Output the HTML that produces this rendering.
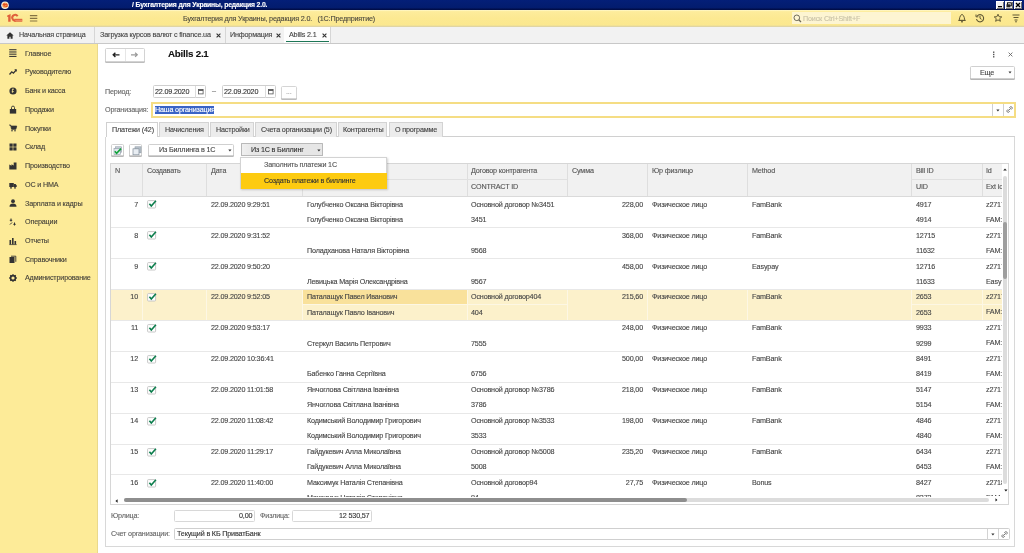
<!DOCTYPE html>
<html><head><meta charset="utf-8"><style>
html,body{margin:0;padding:0;width:1024px;height:553px;overflow:hidden;background:#fff}
body{position:relative;font-family:"Liberation Sans",sans-serif}
.t{position:absolute;white-space:nowrap;line-height:10px;font-family:"Liberation Sans",sans-serif;will-change:transform;-webkit-text-stroke:0.12px}
svg{overflow:visible}
</style></head><body>
<div style="position:absolute;left:0px;top:0px;width:1024px;height:10px;background:linear-gradient(#041f78,#031c6e 75%,#000a40)"></div>
<svg style="position:absolute;left:1px;top:0.8px;" width="8" height="8" viewBox="0 0 8 8"><circle cx="4" cy="4.2" r="3.8" fill="#fbeedd"/><circle cx="4" cy="4.3" r="2.7" fill="#f6b26a"/><path d="M1.8 3.6l1.3-0.8v3M4 4.4a1.1 1.1 0 1 1 2 0.4M4.3 5.4h2.2" stroke="#e5461a" stroke-width="1.1" fill="none"/></svg>
<div class="t" style="left:132px;top:-0.30px;font-size:6.835px;letter-spacing:-0.161px;color:#ffffff;font-weight:bold;">/ Бухгалтерия для Украины, редакция 2.0.</div>
<div style="position:absolute;left:996px;top:1px;width:8px;height:7.5px;background:#f0f0f0;border-top:1px solid #fff;border-left:1px solid #fff;box-sizing:border-box;box-shadow:inset -1px -1px 0 #707070"></div>
<div style="position:absolute;left:1005px;top:1px;width:8px;height:7.5px;background:#f0f0f0;border-top:1px solid #fff;border-left:1px solid #fff;box-sizing:border-box;box-shadow:inset -1px -1px 0 #707070"></div>
<div style="position:absolute;left:1014px;top:1px;width:8px;height:7.5px;background:#f0f0f0;border-top:1px solid #fff;border-left:1px solid #fff;box-sizing:border-box;box-shadow:inset -1px -1px 0 #707070"></div>
<svg style="position:absolute;left:996px;top:1px;" width="8" height="8" viewBox="0 0 8 8"><rect x="2" y="5" width="4" height="1.3" fill="#000"/></svg>
<svg style="position:absolute;left:1005px;top:1px;" width="8" height="8" viewBox="0 0 8 8"><rect x="2.5" y="1.8" width="3.8" height="3" fill="none" stroke="#000" stroke-width="0.9"/><rect x="1.5" y="3.3" width="3.8" height="3" fill="#222"/></svg>
<svg style="position:absolute;left:1014px;top:1px;" width="8" height="8" viewBox="0 0 8 8"><path d="M2 2L6 6M6 2L2 6" stroke="#000" stroke-width="1.3"/></svg>
<div style="position:absolute;left:0px;top:10px;width:1024px;height:16.5px;background:linear-gradient(#fff8cc 0,#fdec9c 1.6px,#fce992 8px,#fbe88f 15px,#e0d5a4 16.5px);box-sizing:border-box"></div>
<svg style="position:absolute;left:7px;top:14px;" width="16" height="8" viewBox="0 0 16 8"><path d="M0.2 1.5L3.6 0V7.7H1.2V2.7L0.2 3z" fill="#e0603c"/><path d="M10.6 2.2A2.9 2.9 0 1 0 8.6 6.6" fill="none" stroke="#e0603c" stroke-width="2.1"/><rect x="7.4" y="4.8" width="7.9" height="2.9" fill="#e0603c"/><rect x="8.2" y="5.9" width="7" height="0.7" fill="#f2a07a"/></svg>
<svg style="position:absolute;left:29px;top:14px;" width="9" height="9" viewBox="0 0 9 9"><path d="M0.9 1.6h7.4M0.9 4.4h7.4M0.9 7h7.4" stroke="#857444" stroke-width="1.1"/></svg>
<div class="t" style="left:183px;top:13.90px;font-size:7.203px;letter-spacing:-0.170px;color:#4d4a3f;font-weight:normal;">Бухгалтерия для Украины, редакция 2.0.&nbsp;&nbsp;&nbsp;(1С:Предприятие)</div>
<div style="position:absolute;left:792px;top:12px;width:159px;height:12px;background:#fdf5d2"></div>
<svg style="position:absolute;left:793px;top:13.5px;" width="9" height="10" viewBox="0 0 9 10"><circle cx="3.8" cy="3.8" r="2.8" fill="none" stroke="#6e6a5a" stroke-width="1"/><path d="M5.8 5.8L8 8" stroke="#6e6a5a" stroke-width="1.3"/></svg>
<div class="t" style="left:803px;top:13.50px;font-size:7.203px;letter-spacing:-0.170px;color:#c9c2a6;font-weight:normal;">Поиск Ctrl+Shift+F</div>
<svg style="position:absolute;left:957px;top:13px;" width="10" height="10" viewBox="0 0 10 10"><path d="M2.2 7.4C2.6 6.4 2.5 2.2 5 1.4 7.5 2.2 7.4 6.4 7.8 7.4z" fill="none" stroke="#5e5633" stroke-width="1"/><path d="M1.3 7.4h7.4" stroke="#5e5633" stroke-width="1"/><circle cx="5" cy="8.7" r="0.9" fill="#5e5633"/></svg>
<svg style="position:absolute;left:975px;top:13px;" width="10" height="10" viewBox="0 0 10 10"><path d="M2.2 3A3.6 3.6 0 1 1 1.5 6" fill="none" stroke="#5e5633" stroke-width="1.1"/><path d="M1 1.5v2.3h2.3" fill="none" stroke="#5e5633" stroke-width="1"/><path d="M5 3v2.3l1.5 1" fill="none" stroke="#5e5633" stroke-width="1"/></svg>
<svg style="position:absolute;left:993px;top:13px;" width="10" height="10" viewBox="0 0 10 10"><path d="M5 1.2l1.1 2.5 2.7.2-2.1 1.8.7 2.6L5 6.9 2.6 8.3l.7-2.6-2.1-1.8 2.7-.2z" fill="none" stroke="#5e5633" stroke-width="0.95"/></svg>
<svg style="position:absolute;left:1011px;top:13px;" width="10" height="10" viewBox="0 0 10 10"><path d="M1.5 2h7M2.5 4.5h5M3.5 7h3" stroke="#5e5633" stroke-width="1"/><circle cx="5" cy="8.8" r="0.8" fill="#5e5633"/></svg>
<div style="position:absolute;left:0px;top:26.5px;width:1024px;height:17.5px;background:#f2f2f2;border-bottom:1px solid #c8c8c8;box-sizing:border-box"></div>
<svg style="position:absolute;left:6px;top:31.5px;" width="8" height="7" viewBox="0 0 8 7"><path d="M4 0.3L0.3 3.6h1.1v3.2h2v-2h1.2v2h2V3.6h1.1z" fill="#333"/></svg>
<div class="t" style="left:19px;top:30.10px;font-size:7.203px;letter-spacing:-0.170px;color:#444;font-weight:normal;">Начальная страница</div>
<div style="position:absolute;left:93.5px;top:27px;width:1.0px;height:16px;background:#d6d6d6"></div>
<div style="position:absolute;left:224.5px;top:27px;width:1.0px;height:16px;background:#d6d6d6"></div>
<div style="position:absolute;left:283.5px;top:27px;width:1.0px;height:16px;background:#d6d6d6"></div>
<div style="position:absolute;left:330px;top:27px;width:1px;height:16px;background:#d6d6d6"></div>
<div class="t" style="left:100px;top:30.10px;font-size:7.203px;letter-spacing:-0.170px;color:#444;font-weight:normal;">Загрузка курсов валют с finance.ua</div>
<div class="t" style="left:230px;top:30.10px;font-size:7.203px;letter-spacing:-0.170px;color:#444;font-weight:normal;">Информация</div>
<div style="position:absolute;left:284.2px;top:27px;width:45.80000000000001px;height:16px;background:#fdfdfd"></div>
<div class="t" style="left:289px;top:30.10px;font-size:7.203px;letter-spacing:-0.170px;color:#444;font-weight:normal;">Abills 2.1</div>
<svg style="position:absolute;left:215.8px;top:32.5px;" width="5" height="5" viewBox="0 0 5 5"><path d="M0.6 0.6L4.4 4.4M4.4 0.6L0.6 4.4" stroke="#333" stroke-width="1.1"/></svg>
<svg style="position:absolute;left:275.8px;top:32.5px;" width="5" height="5" viewBox="0 0 5 5"><path d="M0.6 0.6L4.4 4.4M4.4 0.6L0.6 4.4" stroke="#333" stroke-width="1.1"/></svg>
<svg style="position:absolute;left:321.8px;top:32.5px;" width="5" height="5" viewBox="0 0 5 5"><path d="M0.6 0.6L4.4 4.4M4.4 0.6L0.6 4.4" stroke="#333" stroke-width="1.1"/></svg>
<div style="position:absolute;left:285.5px;top:40.9px;width:43.0px;height:1.3000000000000043px;background:#1d7656"></div>
<div style="position:absolute;left:0px;top:44px;width:98px;height:509px;background:#fdeb98;box-shadow:inset -1px 0 0 #ead98c"></div>
<svg style="position:absolute;left:9px;top:49.4px;" width="8" height="8" viewBox="0 0 8 8"><rect x="0.2" y="0.2" width="7.3" height="1.05" fill="#333"/><rect x="0.2" y="2.45" width="7.3" height="1.05" fill="#333"/><rect x="0.2" y="4.65" width="7.3" height="1.05" fill="#333"/><rect x="0.2" y="6.9" width="7.3" height="1.05" fill="#333"/></svg>
<div class="t" style="left:24.8px;top:48.70px;font-size:7.203px;letter-spacing:-0.170px;color:#45423a;font-weight:normal;">Главное</div>
<svg style="position:absolute;left:9px;top:68.13px;" width="8" height="8" viewBox="0 0 8 8"><path d="M0.5 6.5L2.8 3.8 4.4 5.2 7 2.2" fill="none" stroke="#333" stroke-width="1.3"/><path d="M5.6 1.6h1.9v1.9" fill="#333" stroke="#333" stroke-width="0.6"/></svg>
<div class="t" style="left:24.8px;top:67.43px;font-size:7.203px;letter-spacing:-0.170px;color:#45423a;font-weight:normal;">Руководителю</div>
<svg style="position:absolute;left:9px;top:86.86px;" width="8" height="8" viewBox="0 0 8 8"><circle cx="4" cy="4" r="3.6" fill="#333"/><path d="M3 2.2h2M3.4 2.2v3.6M2.8 4.6h2" stroke="#fbe995" stroke-width="0.8"/></svg>
<div class="t" style="left:24.8px;top:86.16px;font-size:7.203px;letter-spacing:-0.170px;color:#45423a;font-weight:normal;">Банк и касса</div>
<svg style="position:absolute;left:9px;top:105.59px;" width="8" height="8" viewBox="0 0 8 8"><path d="M0.8 3h6.4v4.6H0.8z" fill="#333"/><path d="M2.5 3V1.6a1.5 1.5 0 0 1 3 0V3" fill="none" stroke="#333" stroke-width="0.9"/></svg>
<div class="t" style="left:24.8px;top:104.89px;font-size:7.203px;letter-spacing:-0.170px;color:#45423a;font-weight:normal;">Продажи</div>
<svg style="position:absolute;left:9px;top:124.32px;" width="8" height="8" viewBox="0 0 8 8"><path d="M0.2 1h1.4l1 4.3h4.2l0.9-3.2H2" fill="#333" stroke="#333" stroke-width="0.8"/><circle cx="3" cy="6.8" r="0.8" fill="#333"/><circle cx="6" cy="6.8" r="0.8" fill="#333"/></svg>
<div class="t" style="left:24.8px;top:123.62px;font-size:7.203px;letter-spacing:-0.170px;color:#45423a;font-weight:normal;">Покупки</div>
<svg style="position:absolute;left:9px;top:143.05px;" width="8" height="8" viewBox="0 0 8 8"><rect x="0.5" y="0.5" width="3.2" height="3.2" fill="#333"/><rect x="4.3" y="0.5" width="3.2" height="3.2" fill="#333"/><rect x="0.5" y="4.3" width="3.2" height="3.2" fill="#333"/><rect x="4.3" y="4.3" width="3.2" height="3.2" fill="#333"/></svg>
<div class="t" style="left:24.8px;top:142.35px;font-size:7.203px;letter-spacing:-0.170px;color:#45423a;font-weight:normal;">Склад</div>
<svg style="position:absolute;left:9px;top:161.78px;" width="8" height="8" viewBox="0 0 8 8"><path d="M0.3 7.6V2.5l2.2 1.3V2.2l2.2 1.4V0.6h2.8v7z" fill="#333"/></svg>
<div class="t" style="left:24.8px;top:161.08px;font-size:7.203px;letter-spacing:-0.170px;color:#45423a;font-weight:normal;">Производство</div>
<svg style="position:absolute;left:9px;top:180.51px;" width="8" height="8" viewBox="0 0 8 8"><rect x="0.3" y="2" width="4.5" height="4" fill="#333"/><path d="M4.8 3h1.8l1.1 1.5V6H4.8z" fill="#333"/><circle cx="2" cy="6.8" r="0.9" fill="#333"/><circle cx="6" cy="6.8" r="0.9" fill="#333"/></svg>
<div class="t" style="left:24.8px;top:179.81px;font-size:7.203px;letter-spacing:-0.170px;color:#45423a;font-weight:normal;">ОС и НМА</div>
<svg style="position:absolute;left:9px;top:199.24px;" width="8" height="8" viewBox="0 0 8 8"><circle cx="4" cy="2.2" r="1.9" fill="#333"/><path d="M0.5 7.8c0-2.6 1.5-3.4 3.5-3.4s3.5 0.8 3.5 3.4z" fill="#333"/></svg>
<div class="t" style="left:24.8px;top:198.54px;font-size:7.203px;letter-spacing:-0.170px;color:#45423a;font-weight:normal;">Зарплата и кадры</div>
<svg style="position:absolute;left:9px;top:217.97px;" width="8" height="8" viewBox="0 0 8 8"><path d="M2 0.5v3M0.8 2.3h2.4M5.5 4.5v3M4.3 6.3h2.4M1 6.5l2-2" stroke="#333" stroke-width="1"/></svg>
<div class="t" style="left:24.8px;top:217.27px;font-size:7.203px;letter-spacing:-0.170px;color:#45423a;font-weight:normal;">Операции</div>
<svg style="position:absolute;left:9px;top:236.7px;" width="8" height="8" viewBox="0 0 8 8"><rect x="0.5" y="3" width="1.6" height="4.5" fill="#333"/><rect x="3" y="1" width="1.6" height="6.5" fill="#333"/><rect x="5.5" y="4" width="1.6" height="3.5" fill="#333"/><path d="M0.3 7.6h7.4" stroke="#333" stroke-width="0.7"/></svg>
<div class="t" style="left:24.8px;top:236.00px;font-size:7.203px;letter-spacing:-0.170px;color:#45423a;font-weight:normal;">Отчеты</div>
<svg style="position:absolute;left:9px;top:255.43px;" width="8" height="8" viewBox="0 0 8 8"><rect x="0.5" y="2" width="5" height="6" fill="#333"/><path d="M2 1.2h4.8v5.6" fill="none" stroke="#333" stroke-width="0.9"/></svg>
<div class="t" style="left:24.8px;top:254.73px;font-size:7.203px;letter-spacing:-0.170px;color:#45423a;font-weight:normal;">Справочники</div>
<svg style="position:absolute;left:9px;top:274.16px;" width="8" height="8" viewBox="0 0 8 8"><circle cx="4" cy="4" r="2.4" fill="none" stroke="#333" stroke-width="1.6"/><path d="M4 0.2v1.6M4 6.2v1.6M0.2 4h1.6M6.2 4h1.6M1.3 1.3l1.1 1.1M5.6 5.6l1.1 1.1M6.7 1.3L5.6 2.4M2.4 5.6L1.3 6.7" stroke="#333" stroke-width="1.3"/></svg>
<div class="t" style="left:24.8px;top:273.46px;font-size:7.203px;letter-spacing:-0.170px;color:#45423a;font-weight:normal;">Администрирование</div>
<div style="position:absolute;left:105px;top:48px;width:39.5px;height:13.5px;background:#fff;border:1px solid #d3d3d3;border-radius:1.5px;box-sizing:border-box;box-shadow:0 1px 0 #bdbdbd"></div>
<div style="position:absolute;left:125px;top:49px;width:0.7999999999999972px;height:11.5px;background:#e6e6e6"></div>
<svg style="position:absolute;left:111.5px;top:51px;" width="9" height="8" viewBox="0 0 9 8"><path d="M1.2 3.8h6.3M3.4 1.7L1.2 3.8 3.4 5.9" fill="none" stroke="#222" stroke-width="1.35"/></svg>
<svg style="position:absolute;left:130px;top:51px;" width="9" height="8" viewBox="0 0 9 8"><path d="M7.3 3.8H1M5.1 1.7L7.3 3.8 5.1 5.9" fill="none" stroke="#9a9a9a" stroke-width="1.2"/></svg>
<div class="t" style="left:168px;top:49.30px;font-size:9.779px;letter-spacing:-0.231px;color:#111;font-weight:bold;">Abills 2.1</div>
<svg style="position:absolute;left:992px;top:51px;" width="4" height="7" viewBox="0 0 4 7"><rect x="1" y="0.5" width="1.4" height="1.4" fill="#555"/><rect x="1" y="2.8" width="1.4" height="1.4" fill="#555"/><rect x="1" y="5.1" width="1.4" height="1.4" fill="#555"/></svg>
<svg style="position:absolute;left:1007.5px;top:52px;" width="5" height="5" viewBox="0 0 5 5"><path d="M0.6 0.6L4.4 4.4M4.4 0.6L0.6 4.4" stroke="#666" stroke-width="0.9"/></svg>
<div style="position:absolute;left:969.5px;top:66px;width:45.0px;height:12.5px;background:#fff;border:1px solid #d0d0d0;border-radius:1.5px;box-sizing:border-box;box-shadow:0 1px 0 #b5b5b5"></div>
<div class="t" style="left:980px;top:67.90px;font-size:7.203px;letter-spacing:-0.170px;color:#444;font-weight:normal;">Еще</div>
<svg style="position:absolute;left:1007.5px;top:71px;" width="4" height="3" viewBox="0 0 4 3"><path d="M0.5 0.5h3L2 2.5z" fill="#333"/></svg>
<div class="t" style="left:105px;top:86.80px;font-size:7.203px;letter-spacing:-0.170px;color:#666;font-weight:normal;">Период:</div>
<div style="position:absolute;left:153px;top:85.3px;width:53.30000000000001px;height:13.200000000000003px;background:#fff;border:1px solid #cfcfcf;border-radius:1.5px;box-sizing:border-box"></div>
<div style="position:absolute;left:194.5px;top:86px;width:0.8000000000000114px;height:12px;background:#dcdcdc"></div>
<div class="t" style="left:155px;top:86.80px;font-size:7.203px;letter-spacing:-0.170px;color:#333;font-weight:normal;">22.09.2020</div>
<svg style="position:absolute;left:197.7px;top:89.3px;" width="6" height="6" viewBox="0 0 6 6"><rect x="0.5" y="0.5" width="4.6" height="4.4" fill="none" stroke="#555" stroke-width="0.8"/><rect x="0.5" y="0.5" width="4.6" height="1.4" fill="#555"/></svg>
<div style="position:absolute;left:222.2px;top:85.3px;width:53.400000000000034px;height:13.200000000000003px;background:#fff;border:1px solid #cfcfcf;border-radius:1.5px;box-sizing:border-box"></div>
<div style="position:absolute;left:264.7px;top:86px;width:0.8000000000000114px;height:12px;background:#dcdcdc"></div>
<div class="t" style="left:224.2px;top:86.80px;font-size:7.203px;letter-spacing:-0.170px;color:#333;font-weight:normal;">22.09.2020</div>
<svg style="position:absolute;left:267.9px;top:89.3px;" width="6" height="6" viewBox="0 0 6 6"><rect x="0.5" y="0.5" width="4.6" height="4.4" fill="none" stroke="#555" stroke-width="0.8"/><rect x="0.5" y="0.5" width="4.6" height="1.4" fill="#555"/></svg>
<div class="t" style="left:212px;top:86.30px;font-size:7.203px;letter-spacing:-0.170px;color:#555;font-weight:normal;">–</div>
<div style="position:absolute;left:281px;top:86px;width:15.5px;height:12.5px;background:#fff;border:1px solid #d5d5d5;border-radius:1.5px;box-sizing:border-box;box-shadow:0 1px 0 #bdbdbd"></div>
<div class="t" style="left:285.5px;top:87.30px;font-size:7.203px;letter-spacing:-0.170px;color:#999;font-weight:normal;">...</div>
<div class="t" style="left:105px;top:104.80px;font-size:7.203px;letter-spacing:-0.170px;color:#666;font-weight:normal;">Организация:</div>
<div style="position:absolute;left:151.4px;top:102.2px;width:864.6px;height:15.799999999999997px;background:#fff;border:2px solid #f5dd84;box-sizing:border-box"></div>
<div style="position:absolute;left:154.6px;top:106px;width:59.599999999999994px;height:8.299999999999997px;background:#3a63c5"></div>
<div class="t" style="left:155px;top:105.00px;font-size:7.203px;letter-spacing:-0.170px;color:#fff;font-weight:normal;">Наша организация</div>
<div style="position:absolute;left:992.2px;top:104px;width:0.7999999999999545px;height:12px;background:#d0d0d0"></div>
<div style="position:absolute;left:1003.4px;top:104px;width:0.8000000000000682px;height:12px;background:#d0d0d0"></div>
<svg style="position:absolute;left:996px;top:108.5px;" width="4" height="3" viewBox="0 0 4 3"><path d="M0.3 0.5h3.2L1.9 2.6z" fill="#333"/></svg>
<svg style="position:absolute;left:1006px;top:106px;" width="7" height="7" viewBox="0 0 7 7"><path d="M2.2 4.8l2.6-2.6M3.3 1.8l0.9-0.9a1.3 1.3 0 0 1 1.8 1.8L5.1 3.6M3.8 5.2l-0.9 0.9a1.3 1.3 0 0 1-1.8-1.8l0.9-0.9" fill="none" stroke="#555" stroke-width="0.8"/></svg>
<div style="position:absolute;left:105px;top:136.5px;width:910px;height:410.5px;border:1px solid #d8d8d8;border-top:none;box-sizing:border-box;background:#fff"></div>
<div style="position:absolute;left:158px;top:136px;width:857px;height:1px;background:#d0d0d0"></div>
<div style="position:absolute;left:105.5px;top:122px;width:52.5px;height:15px;background:#fff;border:1px solid #d0d0d0;border-bottom:none;box-sizing:border-box"></div>
<div class="t" style="left:111.7px;top:124.70px;font-size:7.203px;letter-spacing:-0.170px;color:#444;font-weight:normal;">Платежи (42)</div>
<div style="position:absolute;left:158.6px;top:122px;width:50.20000000000002px;height:14.5px;background:#ececec;border:1px solid #d3d3d3;border-bottom:none;box-sizing:border-box"></div>
<div class="t" style="left:164.8px;top:124.70px;font-size:7.203px;letter-spacing:-0.170px;color:#444;font-weight:normal;">Начисления</div>
<div style="position:absolute;left:210.0px;top:122px;width:43.900000000000006px;height:14.5px;background:#ececec;border:1px solid #d3d3d3;border-bottom:none;box-sizing:border-box"></div>
<div class="t" style="left:215.6px;top:124.70px;font-size:7.203px;letter-spacing:-0.170px;color:#444;font-weight:normal;">Настройки</div>
<div style="position:absolute;left:255.1px;top:122px;width:81.69999999999996px;height:14.5px;background:#ececec;border:1px solid #d3d3d3;border-bottom:none;box-sizing:border-box"></div>
<div class="t" style="left:260.5px;top:124.70px;font-size:7.203px;letter-spacing:-0.170px;color:#444;font-weight:normal;">Счета организации (5)</div>
<div style="position:absolute;left:338.0px;top:122px;width:49.39999999999998px;height:14.5px;background:#ececec;border:1px solid #d3d3d3;border-bottom:none;box-sizing:border-box"></div>
<div class="t" style="left:343.4px;top:124.70px;font-size:7.203px;letter-spacing:-0.170px;color:#444;font-weight:normal;">Контрагенты</div>
<div style="position:absolute;left:388.6px;top:122px;width:54.799999999999955px;height:14.5px;background:#ececec;border:1px solid #d3d3d3;border-bottom:none;box-sizing:border-box"></div>
<div class="t" style="left:395px;top:124.70px;font-size:7.203px;letter-spacing:-0.170px;color:#444;font-weight:normal;">О программе</div>
<div style="position:absolute;left:110.6px;top:143.6px;width:13.100000000000009px;height:12.900000000000006px;background:#fff;border:1px solid #d0d0d0;border-radius:1.5px;box-sizing:border-box;box-shadow:0 1px 0 #b8b8b8"></div>
<svg style="position:absolute;left:112.5px;top:145.5px;" width="10" height="10" viewBox="0 0 10 10"><rect x="2.5" y="0.8" width="6" height="5.5" fill="#c9d2da" stroke="#8e9aa6" stroke-width="0.6"/><rect x="1" y="2.5" width="6.5" height="6" fill="#e2e8ee" stroke="#8e9aa6" stroke-width="0.6"/><path d="M1.8 5.2l1.8 2 4.4-4.6" fill="none" stroke="#12a33a" stroke-width="1.6"/></svg>
<div style="position:absolute;left:129.3px;top:143.6px;width:13.199999999999989px;height:12.900000000000006px;background:#fff;border:1px solid #d0d0d0;border-radius:1.5px;box-sizing:border-box;box-shadow:0 1px 0 #b8b8b8"></div>
<svg style="position:absolute;left:131.5px;top:145.5px;" width="10" height="10" viewBox="0 0 10 10"><rect x="3" y="0.8" width="6" height="6" fill="#b9c3cc" stroke="#8e9aa6" stroke-width="0.6"/><rect x="1" y="2.8" width="6" height="6" fill="#e8edf2" stroke="#7f8b97" stroke-width="0.7"/></svg>
<div style="position:absolute;left:148px;top:143.6px;width:86.4px;height:12.900000000000006px;background:#fff;border:1px solid #d0d0d0;border-radius:1.5px;box-sizing:border-box;box-shadow:0 1px 0 #b8b8b8"></div>
<div class="t" style="left:158.6px;top:145.10px;font-size:7.203px;letter-spacing:-0.170px;color:#444;font-weight:normal;">Из Биллинга в 1С</div>
<svg style="position:absolute;left:228px;top:149.3px;" width="4" height="3" viewBox="0 0 4 3"><path d="M0.3 0.5h3.2L1.9 2.6z" fill="#333"/></svg>
<div style="position:absolute;left:240.5px;top:143.3px;width:82.69999999999999px;height:13.0px;background:linear-gradient(90deg,#f0f0f0 0,#e6e6e6 12px,#e6e6e6);border:1.6px solid #b9b9b9;border-radius:0.5px;box-sizing:border-box"></div>
<div class="t" style="left:251px;top:145.00px;font-size:7.203px;letter-spacing:-0.170px;color:#333;font-weight:normal;">Из 1С в Биллинг</div>
<svg style="position:absolute;left:317px;top:149.2px;" width="4" height="3" viewBox="0 0 4 3"><path d="M0.3 0.5h3.2L1.9 2.6z" fill="#333"/></svg>
<div style="position:absolute;left:110.2px;top:162.5px;width:899.3px;height:342.0px;border:1px solid #d6d6d6;box-sizing:border-box;background:#fff"></div>
<div style="position:absolute;left:111.2px;top:163.5px;width:890.8px;height:33.0px;background:#f1f1f1"></div>
<div style="position:absolute;left:142.2px;top:163.5px;width:0.8000000000000114px;height:33.0px;background:#dedede"></div>
<div style="position:absolute;left:206.3px;top:163.5px;width:0.8000000000000114px;height:33.0px;background:#dedede"></div>
<div style="position:absolute;left:301.9px;top:163.5px;width:0.8000000000000114px;height:33.0px;background:#dedede"></div>
<div style="position:absolute;left:466.8px;top:163.5px;width:0.8000000000000114px;height:33.0px;background:#dedede"></div>
<div style="position:absolute;left:567.3px;top:163.5px;width:0.7999999999999545px;height:33.0px;background:#dedede"></div>
<div style="position:absolute;left:647.4px;top:163.5px;width:0.7999999999999545px;height:33.0px;background:#dedede"></div>
<div style="position:absolute;left:746.5px;top:163.5px;width:0.7999999999999545px;height:33.0px;background:#dedede"></div>
<div style="position:absolute;left:911.2px;top:163.5px;width:0.7999999999999545px;height:33.0px;background:#dedede"></div>
<div style="position:absolute;left:982px;top:163.5px;width:0.7999999999999545px;height:33.0px;background:#dedede"></div>
<div style="position:absolute;left:301.9px;top:178.8px;width:265.4px;height:0.799999999999983px;background:#e0e0e0"></div>
<div style="position:absolute;left:911.2px;top:178.8px;width:90.79999999999995px;height:0.799999999999983px;background:#e0e0e0"></div>
<div style="position:absolute;left:111.2px;top:195.8px;width:890.8px;height:0.799999999999983px;background:#dadada"></div>
<div class="t" style="left:115px;top:166.10px;font-size:7.203px;letter-spacing:-0.170px;color:#555;font-weight:normal;">N</div>
<div class="t" style="left:147px;top:166.10px;font-size:7.203px;letter-spacing:-0.170px;color:#555;font-weight:normal;">Создавать</div>
<div class="t" style="left:211px;top:166.10px;font-size:7.203px;letter-spacing:-0.170px;color:#555;font-weight:normal;">Дата</div>
<div class="t" style="left:307px;top:166.10px;font-size:7.203px;letter-spacing:-0.170px;color:#555;font-weight:normal;">Контрагент</div>
<div class="t" style="left:471px;top:166.10px;font-size:7.203px;letter-spacing:-0.170px;color:#555;font-weight:normal;">Договор контрагента</div>
<div class="t" style="left:471px;top:182.10px;font-size:7.203px;letter-spacing:-0.170px;color:#555;font-weight:normal;">CONTRACT ID</div>
<div class="t" style="left:572px;top:166.10px;font-size:7.203px;letter-spacing:-0.170px;color:#555;font-weight:normal;">Сумма</div>
<div class="t" style="left:652px;top:166.10px;font-size:7.203px;letter-spacing:-0.170px;color:#555;font-weight:normal;">Юр физлицо</div>
<div class="t" style="left:751.5px;top:166.10px;font-size:7.203px;letter-spacing:-0.170px;color:#555;font-weight:normal;">Method</div>
<div class="t" style="left:916px;top:166.10px;font-size:7.203px;letter-spacing:-0.170px;color:#555;font-weight:normal;">Bill ID</div>
<div class="t" style="left:916px;top:182.10px;font-size:7.203px;letter-spacing:-0.170px;color:#555;font-weight:normal;">UID</div>
<div class="t" style="left:986px;top:166.10px;font-size:7.203px;letter-spacing:-0.170px;color:#555;font-weight:normal;">Id</div>
<div class="t" style="left:986px;top:182.10px;font-size:7.203px;letter-spacing:-0.170px;color:#555;font-weight:normal;width:16px;overflow:hidden">Ext id</div>
<div style="position:absolute;left:111px;top:196.6px;width:891px;height:301px;overflow:hidden">
<div class="t tr" style="left:-33.50px;width:60px;text-align:right;top:3.10px;font-size:7.203px;letter-spacing:-0.170px;color:#454545">7</div>
<svg style="position:absolute;left:36px;top:3.8px;" width="10" height="10" viewBox="0 0 10 10"><rect x="0.6" y="0.6" width="8" height="7.4" rx="0.8" fill="#fff" stroke="#c2c2c2" stroke-width="0.9"/><path d="M2.4 3.7L4.3 6 8.9 0.7" fill="none" stroke="#0b7d4c" stroke-width="1.6"/></svg>
<div class="t" style="left:99.5px;top:3.10px;font-size:7.203px;letter-spacing:-0.170px;color:#454545;font-weight:normal;">22.09.2020 9:29:51</div>
<div class="t" style="left:196px;top:3.10px;font-size:7.203px;letter-spacing:-0.170px;color:#454545;font-weight:normal;">Голубченко Оксана Вікторівна</div>
<div class="t" style="left:196px;top:18.25px;font-size:7.203px;letter-spacing:-0.170px;color:#454545;font-weight:normal;">Голубченко Оксана Вікторівна</div>
<div class="t" style="left:360px;top:3.10px;font-size:7.203px;letter-spacing:-0.170px;color:#454545;font-weight:normal;">Основной договор №3451</div>
<div class="t" style="left:360px;top:18.25px;font-size:7.203px;letter-spacing:-0.170px;color:#454545;font-weight:normal;">3451</div>
<div class="t tr" style="left:472.00px;width:60px;text-align:right;top:3.10px;font-size:7.203px;letter-spacing:-0.170px;color:#454545">228,00</div>
<div class="t" style="left:540.5px;top:3.10px;font-size:7.203px;letter-spacing:-0.170px;color:#454545;font-weight:normal;">Физическое лицо</div>
<div class="t" style="left:640.5px;top:3.10px;font-size:7.203px;letter-spacing:-0.170px;color:#454545;font-weight:normal;">FamBank</div>
<div class="t" style="left:805px;top:3.10px;font-size:7.203px;letter-spacing:-0.170px;color:#454545;font-weight:normal;">4917</div>
<div class="t" style="left:805px;top:18.25px;font-size:7.203px;letter-spacing:-0.170px;color:#454545;font-weight:normal;">4914</div>
<div style="position:absolute;left:875px;top:3.10px;width:16px;height:30.00px;overflow:hidden">
<div class="t" style="left:0;top:0;font-size:7.203px;letter-spacing:-0.170px;color:#454545">z2717</div><div class="t" style="left:0;top:15px;font-size:7.203px;letter-spacing:-0.170px;color:#454545">FAM:</div></div>
<div style="position:absolute;left:0px;top:30.43px;width:891px;height:0.8000000000000007px;background:#e8e8e8"></div>
<div class="t tr" style="left:-33.50px;width:60px;text-align:right;top:34.03px;font-size:7.203px;letter-spacing:-0.170px;color:#454545">8</div>
<svg style="position:absolute;left:36px;top:34.73px;" width="10" height="10" viewBox="0 0 10 10"><rect x="0.6" y="0.6" width="8" height="7.4" rx="0.8" fill="#fff" stroke="#c2c2c2" stroke-width="0.9"/><path d="M2.4 3.7L4.3 6 8.9 0.7" fill="none" stroke="#0b7d4c" stroke-width="1.6"/></svg>
<div class="t" style="left:99.5px;top:34.03px;font-size:7.203px;letter-spacing:-0.170px;color:#454545;font-weight:normal;">22.09.2020 9:31:52</div>
<div class="t" style="left:196px;top:49.18px;font-size:7.203px;letter-spacing:-0.170px;color:#454545;font-weight:normal;">Поладханова Наталя Вікторівна</div>
<div class="t" style="left:360px;top:49.18px;font-size:7.203px;letter-spacing:-0.170px;color:#454545;font-weight:normal;">9568</div>
<div class="t tr" style="left:472.00px;width:60px;text-align:right;top:34.03px;font-size:7.203px;letter-spacing:-0.170px;color:#454545">368,00</div>
<div class="t" style="left:540.5px;top:34.03px;font-size:7.203px;letter-spacing:-0.170px;color:#454545;font-weight:normal;">Физическое лицо</div>
<div class="t" style="left:640.5px;top:34.03px;font-size:7.203px;letter-spacing:-0.170px;color:#454545;font-weight:normal;">FamBank</div>
<div class="t" style="left:805px;top:34.03px;font-size:7.203px;letter-spacing:-0.170px;color:#454545;font-weight:normal;">12715</div>
<div class="t" style="left:805px;top:49.18px;font-size:7.203px;letter-spacing:-0.170px;color:#454545;font-weight:normal;">11632</div>
<div style="position:absolute;left:875px;top:34.03px;width:16px;height:30.00px;overflow:hidden">
<div class="t" style="left:0;top:0;font-size:7.203px;letter-spacing:-0.170px;color:#454545">z2717</div><div class="t" style="left:0;top:15px;font-size:7.203px;letter-spacing:-0.170px;color:#454545">FAM:</div></div>
<div style="position:absolute;left:0px;top:61.36px;width:891px;height:0.7999999999999972px;background:#e8e8e8"></div>
<div class="t tr" style="left:-33.50px;width:60px;text-align:right;top:64.96px;font-size:7.203px;letter-spacing:-0.170px;color:#454545">9</div>
<svg style="position:absolute;left:36px;top:65.66px;" width="10" height="10" viewBox="0 0 10 10"><rect x="0.6" y="0.6" width="8" height="7.4" rx="0.8" fill="#fff" stroke="#c2c2c2" stroke-width="0.9"/><path d="M2.4 3.7L4.3 6 8.9 0.7" fill="none" stroke="#0b7d4c" stroke-width="1.6"/></svg>
<div class="t" style="left:99.5px;top:64.96px;font-size:7.203px;letter-spacing:-0.170px;color:#454545;font-weight:normal;">22.09.2020 9:50:20</div>
<div class="t" style="left:196px;top:80.11px;font-size:7.203px;letter-spacing:-0.170px;color:#454545;font-weight:normal;">Левицька Марія Олександрівна</div>
<div class="t" style="left:360px;top:80.11px;font-size:7.203px;letter-spacing:-0.170px;color:#454545;font-weight:normal;">9567</div>
<div class="t tr" style="left:472.00px;width:60px;text-align:right;top:64.96px;font-size:7.203px;letter-spacing:-0.170px;color:#454545">458,00</div>
<div class="t" style="left:540.5px;top:64.96px;font-size:7.203px;letter-spacing:-0.170px;color:#454545;font-weight:normal;">Физическое лицо</div>
<div class="t" style="left:640.5px;top:64.96px;font-size:7.203px;letter-spacing:-0.170px;color:#454545;font-weight:normal;">Easypay</div>
<div class="t" style="left:805px;top:64.96px;font-size:7.203px;letter-spacing:-0.170px;color:#454545;font-weight:normal;">12716</div>
<div class="t" style="left:805px;top:80.11px;font-size:7.203px;letter-spacing:-0.170px;color:#454545;font-weight:normal;">11633</div>
<div style="position:absolute;left:875px;top:64.96px;width:16px;height:30.00px;overflow:hidden">
<div class="t" style="left:0;top:0;font-size:7.203px;letter-spacing:-0.170px;color:#454545">z2717</div><div class="t" style="left:0;top:15px;font-size:7.203px;letter-spacing:-0.170px;color:#454545">Easy</div></div>
<div style="position:absolute;left:0px;top:92.69px;width:891px;height:30.930000000000007px;background:#fcf1cb"></div>
<div style="position:absolute;left:191.5px;top:92.99px;width:164.0px;height:14.0px;background:#f9e19b"></div>
<div style="position:absolute;left:31.2px;top:92.69px;width:1.0000000000000036px;height:30.930000000000007px;background:#fdf7e4"></div>
<div style="position:absolute;left:95.3px;top:92.69px;width:1.0px;height:30.930000000000007px;background:#fdf7e4"></div>
<div style="position:absolute;left:190.9px;top:92.69px;width:1.0px;height:30.930000000000007px;background:#fdf7e4"></div>
<div style="position:absolute;left:355.8px;top:92.69px;width:1.0px;height:30.930000000000007px;background:#fdf7e4"></div>
<div style="position:absolute;left:456.3px;top:92.69px;width:1.0px;height:30.930000000000007px;background:#fdf7e4"></div>
<div style="position:absolute;left:536.4px;top:92.69px;width:1.0px;height:30.930000000000007px;background:#fdf7e4"></div>
<div style="position:absolute;left:635.5px;top:92.69px;width:1.0px;height:30.930000000000007px;background:#fdf7e4"></div>
<div style="position:absolute;left:800.2px;top:92.69px;width:1.0px;height:30.930000000000007px;background:#fdf7e4"></div>
<div style="position:absolute;left:871px;top:92.69px;width:1px;height:30.930000000000007px;background:#fdf7e4"></div>
<div style="position:absolute;left:191.5px;top:107.49px;width:264.8px;height:0.8000000000000114px;background:#fdf7e4"></div>
<div style="position:absolute;left:800.2px;top:107.49px;width:90.79999999999995px;height:0.8000000000000114px;background:#fdf7e4"></div>
<div style="position:absolute;left:0px;top:92.29px;width:891px;height:0.7999999999999972px;background:#e8e8e8"></div>
<div class="t tr" style="left:-33.50px;width:60px;text-align:right;top:95.89px;font-size:7.203px;letter-spacing:-0.170px;color:#454545">10</div>
<svg style="position:absolute;left:36px;top:96.59px;" width="10" height="10" viewBox="0 0 10 10"><rect x="0.6" y="0.6" width="8" height="7.4" rx="0.8" fill="#fff" stroke="#c2c2c2" stroke-width="0.9"/><path d="M2.4 3.7L4.3 6 8.9 0.7" fill="none" stroke="#0b7d4c" stroke-width="1.6"/></svg>
<div class="t" style="left:99.5px;top:95.89px;font-size:7.203px;letter-spacing:-0.170px;color:#454545;font-weight:normal;">22.09.2020 9:52:05</div>
<div class="t" style="left:196px;top:95.89px;font-size:7.203px;letter-spacing:-0.170px;color:#454545;font-weight:normal;">Паталащук Павел Иванович</div>
<div class="t" style="left:196px;top:111.04px;font-size:7.203px;letter-spacing:-0.170px;color:#454545;font-weight:normal;">Паталащук Павло Іванович</div>
<div class="t" style="left:360px;top:95.89px;font-size:7.203px;letter-spacing:-0.170px;color:#454545;font-weight:normal;">Основной договор404</div>
<div class="t" style="left:360px;top:111.04px;font-size:7.203px;letter-spacing:-0.170px;color:#454545;font-weight:normal;">404</div>
<div class="t tr" style="left:472.00px;width:60px;text-align:right;top:95.89px;font-size:7.203px;letter-spacing:-0.170px;color:#454545">215,60</div>
<div class="t" style="left:540.5px;top:95.89px;font-size:7.203px;letter-spacing:-0.170px;color:#454545;font-weight:normal;">Физическое лицо</div>
<div class="t" style="left:640.5px;top:95.89px;font-size:7.203px;letter-spacing:-0.170px;color:#454545;font-weight:normal;">FamBank</div>
<div class="t" style="left:805px;top:95.89px;font-size:7.203px;letter-spacing:-0.170px;color:#454545;font-weight:normal;">2653</div>
<div class="t" style="left:805px;top:111.04px;font-size:7.203px;letter-spacing:-0.170px;color:#454545;font-weight:normal;">2653</div>
<div style="position:absolute;left:875px;top:95.89px;width:16px;height:30.00px;overflow:hidden">
<div class="t" style="left:0;top:0;font-size:7.203px;letter-spacing:-0.170px;color:#454545">z2717</div><div class="t" style="left:0;top:15px;font-size:7.203px;letter-spacing:-0.170px;color:#454545">FAM:</div></div>
<div style="position:absolute;left:0px;top:123.22px;width:891px;height:0.7999999999999972px;background:#e8e8e8"></div>
<div class="t tr" style="left:-33.50px;width:60px;text-align:right;top:126.82px;font-size:7.203px;letter-spacing:-0.170px;color:#454545">11</div>
<svg style="position:absolute;left:36px;top:127.52px;" width="10" height="10" viewBox="0 0 10 10"><rect x="0.6" y="0.6" width="8" height="7.4" rx="0.8" fill="#fff" stroke="#c2c2c2" stroke-width="0.9"/><path d="M2.4 3.7L4.3 6 8.9 0.7" fill="none" stroke="#0b7d4c" stroke-width="1.6"/></svg>
<div class="t" style="left:99.5px;top:126.82px;font-size:7.203px;letter-spacing:-0.170px;color:#454545;font-weight:normal;">22.09.2020 9:53:17</div>
<div class="t" style="left:196px;top:141.97px;font-size:7.203px;letter-spacing:-0.170px;color:#454545;font-weight:normal;">Стеркул Василь Петрович</div>
<div class="t" style="left:360px;top:141.97px;font-size:7.203px;letter-spacing:-0.170px;color:#454545;font-weight:normal;">7555</div>
<div class="t tr" style="left:472.00px;width:60px;text-align:right;top:126.82px;font-size:7.203px;letter-spacing:-0.170px;color:#454545">248,00</div>
<div class="t" style="left:540.5px;top:126.82px;font-size:7.203px;letter-spacing:-0.170px;color:#454545;font-weight:normal;">Физическое лицо</div>
<div class="t" style="left:640.5px;top:126.82px;font-size:7.203px;letter-spacing:-0.170px;color:#454545;font-weight:normal;">FamBank</div>
<div class="t" style="left:805px;top:126.82px;font-size:7.203px;letter-spacing:-0.170px;color:#454545;font-weight:normal;">9933</div>
<div class="t" style="left:805px;top:141.97px;font-size:7.203px;letter-spacing:-0.170px;color:#454545;font-weight:normal;">9299</div>
<div style="position:absolute;left:875px;top:126.82px;width:16px;height:30.00px;overflow:hidden">
<div class="t" style="left:0;top:0;font-size:7.203px;letter-spacing:-0.170px;color:#454545">z2717</div><div class="t" style="left:0;top:15px;font-size:7.203px;letter-spacing:-0.170px;color:#454545">FAM:</div></div>
<div style="position:absolute;left:0px;top:154.15px;width:891px;height:0.799999999999983px;background:#e8e8e8"></div>
<div class="t tr" style="left:-33.50px;width:60px;text-align:right;top:157.75px;font-size:7.203px;letter-spacing:-0.170px;color:#454545">12</div>
<svg style="position:absolute;left:36px;top:158.45px;" width="10" height="10" viewBox="0 0 10 10"><rect x="0.6" y="0.6" width="8" height="7.4" rx="0.8" fill="#fff" stroke="#c2c2c2" stroke-width="0.9"/><path d="M2.4 3.7L4.3 6 8.9 0.7" fill="none" stroke="#0b7d4c" stroke-width="1.6"/></svg>
<div class="t" style="left:99.5px;top:157.75px;font-size:7.203px;letter-spacing:-0.170px;color:#454545;font-weight:normal;">22.09.2020 10:36:41</div>
<div class="t" style="left:196px;top:172.90px;font-size:7.203px;letter-spacing:-0.170px;color:#454545;font-weight:normal;">Бабенко Ганна Сергіївна</div>
<div class="t" style="left:360px;top:172.90px;font-size:7.203px;letter-spacing:-0.170px;color:#454545;font-weight:normal;">6756</div>
<div class="t tr" style="left:472.00px;width:60px;text-align:right;top:157.75px;font-size:7.203px;letter-spacing:-0.170px;color:#454545">500,00</div>
<div class="t" style="left:540.5px;top:157.75px;font-size:7.203px;letter-spacing:-0.170px;color:#454545;font-weight:normal;">Физическое лицо</div>
<div class="t" style="left:640.5px;top:157.75px;font-size:7.203px;letter-spacing:-0.170px;color:#454545;font-weight:normal;">FamBank</div>
<div class="t" style="left:805px;top:157.75px;font-size:7.203px;letter-spacing:-0.170px;color:#454545;font-weight:normal;">8491</div>
<div class="t" style="left:805px;top:172.90px;font-size:7.203px;letter-spacing:-0.170px;color:#454545;font-weight:normal;">8419</div>
<div style="position:absolute;left:875px;top:157.75px;width:16px;height:30.00px;overflow:hidden">
<div class="t" style="left:0;top:0;font-size:7.203px;letter-spacing:-0.170px;color:#454545">z2717</div><div class="t" style="left:0;top:15px;font-size:7.203px;letter-spacing:-0.170px;color:#454545">FAM:</div></div>
<div style="position:absolute;left:0px;top:185.08px;width:891px;height:0.799999999999983px;background:#e8e8e8"></div>
<div class="t tr" style="left:-33.50px;width:60px;text-align:right;top:188.68px;font-size:7.203px;letter-spacing:-0.170px;color:#454545">13</div>
<svg style="position:absolute;left:36px;top:189.38px;" width="10" height="10" viewBox="0 0 10 10"><rect x="0.6" y="0.6" width="8" height="7.4" rx="0.8" fill="#fff" stroke="#c2c2c2" stroke-width="0.9"/><path d="M2.4 3.7L4.3 6 8.9 0.7" fill="none" stroke="#0b7d4c" stroke-width="1.6"/></svg>
<div class="t" style="left:99.5px;top:188.68px;font-size:7.203px;letter-spacing:-0.170px;color:#454545;font-weight:normal;">22.09.2020 11:01:58</div>
<div class="t" style="left:196px;top:188.68px;font-size:7.203px;letter-spacing:-0.170px;color:#454545;font-weight:normal;">Янчоглова Світлана Іванівна</div>
<div class="t" style="left:196px;top:203.83px;font-size:7.203px;letter-spacing:-0.170px;color:#454545;font-weight:normal;">Янчоглова Світлана Іванівна</div>
<div class="t" style="left:360px;top:188.68px;font-size:7.203px;letter-spacing:-0.170px;color:#454545;font-weight:normal;">Основной договор №3786</div>
<div class="t" style="left:360px;top:203.83px;font-size:7.203px;letter-spacing:-0.170px;color:#454545;font-weight:normal;">3786</div>
<div class="t tr" style="left:472.00px;width:60px;text-align:right;top:188.68px;font-size:7.203px;letter-spacing:-0.170px;color:#454545">218,00</div>
<div class="t" style="left:540.5px;top:188.68px;font-size:7.203px;letter-spacing:-0.170px;color:#454545;font-weight:normal;">Физическое лицо</div>
<div class="t" style="left:640.5px;top:188.68px;font-size:7.203px;letter-spacing:-0.170px;color:#454545;font-weight:normal;">FamBank</div>
<div class="t" style="left:805px;top:188.68px;font-size:7.203px;letter-spacing:-0.170px;color:#454545;font-weight:normal;">5147</div>
<div class="t" style="left:805px;top:203.83px;font-size:7.203px;letter-spacing:-0.170px;color:#454545;font-weight:normal;">5154</div>
<div style="position:absolute;left:875px;top:188.68px;width:16px;height:30.00px;overflow:hidden">
<div class="t" style="left:0;top:0;font-size:7.203px;letter-spacing:-0.170px;color:#454545">z2717</div><div class="t" style="left:0;top:15px;font-size:7.203px;letter-spacing:-0.170px;color:#454545">FAM:</div></div>
<div style="position:absolute;left:0px;top:216.01px;width:891px;height:0.8000000000000114px;background:#e8e8e8"></div>
<div class="t tr" style="left:-33.50px;width:60px;text-align:right;top:219.61px;font-size:7.203px;letter-spacing:-0.170px;color:#454545">14</div>
<svg style="position:absolute;left:36px;top:220.31px;" width="10" height="10" viewBox="0 0 10 10"><rect x="0.6" y="0.6" width="8" height="7.4" rx="0.8" fill="#fff" stroke="#c2c2c2" stroke-width="0.9"/><path d="M2.4 3.7L4.3 6 8.9 0.7" fill="none" stroke="#0b7d4c" stroke-width="1.6"/></svg>
<div class="t" style="left:99.5px;top:219.61px;font-size:7.203px;letter-spacing:-0.170px;color:#454545;font-weight:normal;">22.09.2020 11:08:42</div>
<div class="t" style="left:196px;top:219.61px;font-size:7.203px;letter-spacing:-0.170px;color:#454545;font-weight:normal;">Кодимський Володимир Григорович</div>
<div class="t" style="left:196px;top:234.76px;font-size:7.203px;letter-spacing:-0.170px;color:#454545;font-weight:normal;">Кодимський Володимир Григорович</div>
<div class="t" style="left:360px;top:219.61px;font-size:7.203px;letter-spacing:-0.170px;color:#454545;font-weight:normal;">Основной договор №3533</div>
<div class="t" style="left:360px;top:234.76px;font-size:7.203px;letter-spacing:-0.170px;color:#454545;font-weight:normal;">3533</div>
<div class="t tr" style="left:472.00px;width:60px;text-align:right;top:219.61px;font-size:7.203px;letter-spacing:-0.170px;color:#454545">198,00</div>
<div class="t" style="left:540.5px;top:219.61px;font-size:7.203px;letter-spacing:-0.170px;color:#454545;font-weight:normal;">Физическое лицо</div>
<div class="t" style="left:640.5px;top:219.61px;font-size:7.203px;letter-spacing:-0.170px;color:#454545;font-weight:normal;">FamBank</div>
<div class="t" style="left:805px;top:219.61px;font-size:7.203px;letter-spacing:-0.170px;color:#454545;font-weight:normal;">4846</div>
<div class="t" style="left:805px;top:234.76px;font-size:7.203px;letter-spacing:-0.170px;color:#454545;font-weight:normal;">4840</div>
<div style="position:absolute;left:875px;top:219.61px;width:16px;height:30.00px;overflow:hidden">
<div class="t" style="left:0;top:0;font-size:7.203px;letter-spacing:-0.170px;color:#454545">z2717</div><div class="t" style="left:0;top:15px;font-size:7.203px;letter-spacing:-0.170px;color:#454545">FAM:</div></div>
<div style="position:absolute;left:0px;top:246.94px;width:891px;height:0.8000000000000114px;background:#e8e8e8"></div>
<div class="t tr" style="left:-33.50px;width:60px;text-align:right;top:250.54px;font-size:7.203px;letter-spacing:-0.170px;color:#454545">15</div>
<svg style="position:absolute;left:36px;top:251.24px;" width="10" height="10" viewBox="0 0 10 10"><rect x="0.6" y="0.6" width="8" height="7.4" rx="0.8" fill="#fff" stroke="#c2c2c2" stroke-width="0.9"/><path d="M2.4 3.7L4.3 6 8.9 0.7" fill="none" stroke="#0b7d4c" stroke-width="1.6"/></svg>
<div class="t" style="left:99.5px;top:250.54px;font-size:7.203px;letter-spacing:-0.170px;color:#454545;font-weight:normal;">22.09.2020 11:29:17</div>
<div class="t" style="left:196px;top:250.54px;font-size:7.203px;letter-spacing:-0.170px;color:#454545;font-weight:normal;">Гайдукевич Алла Миколаївна</div>
<div class="t" style="left:196px;top:265.69px;font-size:7.203px;letter-spacing:-0.170px;color:#454545;font-weight:normal;">Гайдукевич Алла Миколаївна</div>
<div class="t" style="left:360px;top:250.54px;font-size:7.203px;letter-spacing:-0.170px;color:#454545;font-weight:normal;">Основной договор №5008</div>
<div class="t" style="left:360px;top:265.69px;font-size:7.203px;letter-spacing:-0.170px;color:#454545;font-weight:normal;">5008</div>
<div class="t tr" style="left:472.00px;width:60px;text-align:right;top:250.54px;font-size:7.203px;letter-spacing:-0.170px;color:#454545">235,20</div>
<div class="t" style="left:540.5px;top:250.54px;font-size:7.203px;letter-spacing:-0.170px;color:#454545;font-weight:normal;">Физическое лицо</div>
<div class="t" style="left:640.5px;top:250.54px;font-size:7.203px;letter-spacing:-0.170px;color:#454545;font-weight:normal;">FamBank</div>
<div class="t" style="left:805px;top:250.54px;font-size:7.203px;letter-spacing:-0.170px;color:#454545;font-weight:normal;">6434</div>
<div class="t" style="left:805px;top:265.69px;font-size:7.203px;letter-spacing:-0.170px;color:#454545;font-weight:normal;">6453</div>
<div style="position:absolute;left:875px;top:250.54px;width:16px;height:30.00px;overflow:hidden">
<div class="t" style="left:0;top:0;font-size:7.203px;letter-spacing:-0.170px;color:#454545">z2717</div><div class="t" style="left:0;top:15px;font-size:7.203px;letter-spacing:-0.170px;color:#454545">FAM:</div></div>
<div style="position:absolute;left:0px;top:277.87px;width:891px;height:0.8000000000000114px;background:#e8e8e8"></div>
<div class="t tr" style="left:-33.50px;width:60px;text-align:right;top:281.47px;font-size:7.203px;letter-spacing:-0.170px;color:#454545">16</div>
<svg style="position:absolute;left:36px;top:282.17px;" width="10" height="10" viewBox="0 0 10 10"><rect x="0.6" y="0.6" width="8" height="7.4" rx="0.8" fill="#fff" stroke="#c2c2c2" stroke-width="0.9"/><path d="M2.4 3.7L4.3 6 8.9 0.7" fill="none" stroke="#0b7d4c" stroke-width="1.6"/></svg>
<div class="t" style="left:99.5px;top:281.47px;font-size:7.203px;letter-spacing:-0.170px;color:#454545;font-weight:normal;">22.09.2020 11:40:00</div>
<div class="t" style="left:196px;top:281.47px;font-size:7.203px;letter-spacing:-0.170px;color:#454545;font-weight:normal;">Максимук Наталія Степанівна</div>
<div class="t" style="left:196px;top:296.62px;font-size:7.203px;letter-spacing:-0.170px;color:#454545;font-weight:normal;">Максимук Наталія Степанівна</div>
<div class="t" style="left:360px;top:281.47px;font-size:7.203px;letter-spacing:-0.170px;color:#454545;font-weight:normal;">Основной договор94</div>
<div class="t" style="left:360px;top:296.62px;font-size:7.203px;letter-spacing:-0.170px;color:#454545;font-weight:normal;">94</div>
<div class="t tr" style="left:472.00px;width:60px;text-align:right;top:281.47px;font-size:7.203px;letter-spacing:-0.170px;color:#454545">27,75</div>
<div class="t" style="left:540.5px;top:281.47px;font-size:7.203px;letter-spacing:-0.170px;color:#454545;font-weight:normal;">Физическое лицо</div>
<div class="t" style="left:640.5px;top:281.47px;font-size:7.203px;letter-spacing:-0.170px;color:#454545;font-weight:normal;">Bonus</div>
<div class="t" style="left:805px;top:281.47px;font-size:7.203px;letter-spacing:-0.170px;color:#454545;font-weight:normal;">8427</div>
<div class="t" style="left:805px;top:296.62px;font-size:7.203px;letter-spacing:-0.170px;color:#454545;font-weight:normal;">8373</div>
<div style="position:absolute;left:875px;top:281.47px;width:16px;height:18.13px;overflow:hidden">
<div class="t" style="left:0;top:0;font-size:7.203px;letter-spacing:-0.170px;color:#454545">z2718</div><div class="t" style="left:0;top:15px;font-size:7.203px;letter-spacing:-0.170px;color:#454545">FAM:</div></div>
</div>
<div style="position:absolute;left:1003.3px;top:176px;width:3.900000000000091px;height:307.5px;background:#dcdcdc;border-radius:2px"></div>
<div style="position:absolute;left:1003.3px;top:221.6px;width:3.900000000000091px;height:57.79999999999998px;background:#9e9e9e;border-radius:2px"></div>
<svg style="position:absolute;left:1003px;top:167.5px;" width="4" height="3" viewBox="0 0 4 3"><path d="M0.2 2.6h3.6L2 0.4z" fill="#222"/></svg>
<svg style="position:absolute;left:1003.5px;top:489px;" width="4" height="3" viewBox="0 0 4 3"><path d="M0.3 0.5h3.2L1.9 2.4z" fill="#111"/></svg>
<div style="position:absolute;left:111px;top:496.8px;width:891px;height:7.199999999999989px;background:#fff"></div>
<div style="position:absolute;left:123.5px;top:498.3px;width:865.5px;height:4.0px;background:#dcdcdc;border-radius:2px"></div>
<div style="position:absolute;left:123.5px;top:498.3px;width:563.5px;height:4.0px;background:#8e8e8e;border-radius:2px"></div>
<svg style="position:absolute;left:115px;top:498.5px;" width="3" height="4" viewBox="0 0 3 4"><path d="M2.6 0.2v3.6L0.4 2z" fill="#222"/></svg>
<svg style="position:absolute;left:994.5px;top:498.3px;" width="3" height="4" viewBox="0 0 3 4"><path d="M0.5 0.3v3.2L2.4 1.9z" fill="#111"/></svg>
<div style="position:absolute;left:240.3px;top:156.6px;width:147.2px;height:32.900000000000006px;background:#fff;border:1px solid #d3d3d3;box-sizing:border-box;box-shadow:1px 1px 2px rgba(0,0,0,.18)"></div>
<div style="position:absolute;left:241.2px;top:173.2px;width:145.40000000000003px;height:15.400000000000006px;background:#fdcb10"></div>
<div class="t" style="left:264px;top:159.80px;font-size:7.203px;letter-spacing:-0.170px;color:#555;font-weight:normal;">Заполнить платежи 1С</div>
<div class="t" style="left:264px;top:175.80px;font-size:7.203px;letter-spacing:-0.170px;color:#333;font-weight:normal;">Создать платежи в биллинге</div>
<div class="t" style="left:110.5px;top:510.60px;font-size:7.203px;letter-spacing:-0.170px;color:#666;font-weight:normal;">Юрлица:</div>
<div style="position:absolute;left:174.4px;top:509.5px;width:80.19999999999999px;height:12.5px;background:#fff;border:1px solid #d8d8d8;border-radius:1.5px;box-sizing:border-box"></div>
<div class="t tr" style="right:771.5px;top:510.60px;font-size:7.203px;letter-spacing:-0.170px;color:#333;font-weight:normal;text-align:right;">0,00</div>
<div class="t" style="left:259.8px;top:510.60px;font-size:7.203px;letter-spacing:-0.170px;color:#666;font-weight:normal;">Физлица:</div>
<div style="position:absolute;left:291.5px;top:509.5px;width:80.30000000000001px;height:12.5px;background:#fff;border:1px solid #d8d8d8;border-radius:1.5px;box-sizing:border-box"></div>
<div class="t tr" style="right:654.4px;top:510.60px;font-size:7.203px;letter-spacing:-0.170px;color:#333;font-weight:normal;text-align:right;">12 530,57</div>
<div class="t" style="left:110.5px;top:529.20px;font-size:7.203px;letter-spacing:-0.170px;color:#666;font-weight:normal;">Счет организации:</div>
<div style="position:absolute;left:174.4px;top:527.6px;width:835.2px;height:12.699999999999932px;background:#fff;border:1px solid #cfcfcf;border-radius:1.5px;box-sizing:border-box"></div>
<div class="t" style="left:176.5px;top:529.00px;font-size:7.203px;letter-spacing:-0.170px;color:#333;font-weight:normal;">Текущий в КБ ПриватБанк</div>
<div style="position:absolute;left:987px;top:528.5px;width:0.7999999999999545px;height:11.0px;background:#d3d3d3"></div>
<div style="position:absolute;left:998px;top:528.5px;width:0.7999999999999545px;height:11.0px;background:#d3d3d3"></div>
<svg style="position:absolute;left:990.5px;top:532.5px;" width="4" height="3" viewBox="0 0 4 3"><path d="M0.3 0.5h3.2L1.9 2.6z" fill="#333"/></svg>
<svg style="position:absolute;left:1000.5px;top:530.5px;" width="7" height="7" viewBox="0 0 7 7"><path d="M2.2 4.8l2.6-2.6M3.3 1.8l0.9-0.9a1.3 1.3 0 0 1 1.8 1.8L5.1 3.6M3.8 5.2l-0.9 0.9a1.3 1.3 0 0 1-1.8-1.8l0.9-0.9" fill="none" stroke="#555" stroke-width="0.8"/></svg>
</body></html>
